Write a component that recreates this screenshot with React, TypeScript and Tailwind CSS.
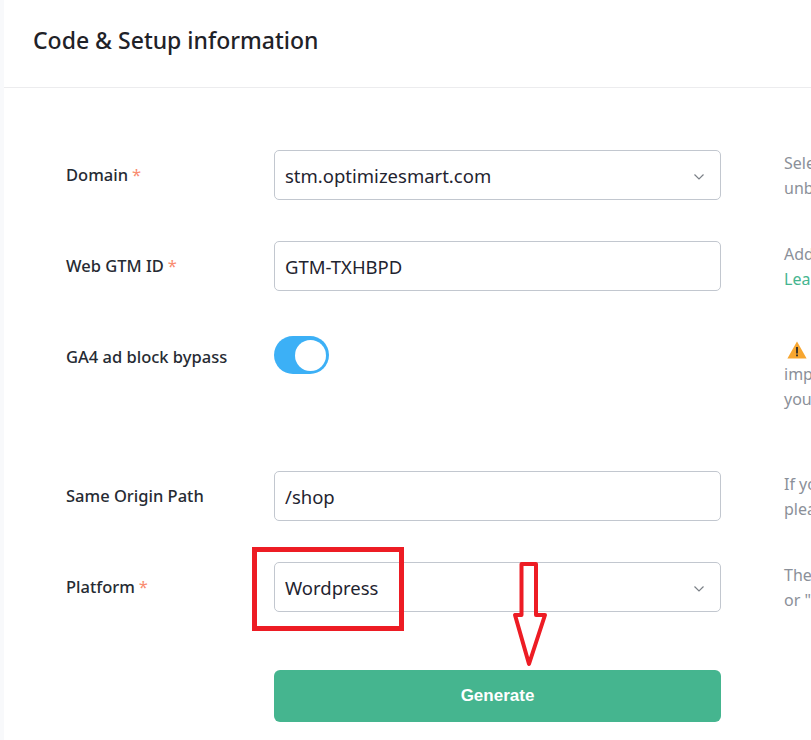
import React from "react";

const font = { fontFamily: '"Noto Sans", sans-serif' };

function Chevron() {
  return (
    <svg width="12" height="8" viewBox="0 0 12 8" fill="none" className="absolute right-[15px] top-[22px]">
      <path d="M1.5 1.5 6 6l4.5-4.5" stroke="#7b8087" strokeWidth="1.2" />
    </svg>
  );
}

function Field({ value, select }: { value: string; select?: boolean }) {
  return (
    <div className="relative flex h-[50px] w-[447px] shrink-0 items-center whitespace-nowrap rounded-[5px] border border-[#c2c7cf] bg-white pl-[10px] pt-[1px] text-[18.5px] text-[#1f2430]">
      {value}
      {select && <Chevron />}
    </div>
  );
}

function Label({ text, required }: { text: string; required?: boolean }) {
  return (
    <div className="w-[208px] shrink-0 text-[16.5px] font-medium text-[#262b33]">
      {text}
      {required && <span className="ml-1 font-normal text-[#f98c70]">*</span>}
    </div>
  );
}

function Help({ children }: { children: React.ReactNode }) {
  return (
    <div className="ml-[63px] w-[420px] shrink-0 self-start whitespace-nowrap pt-[1px] text-[16px] leading-[25px] text-[#8b9099]">
      {children}
    </div>
  );
}

export default function App() {
  return (
    <div className="relative h-[740px] w-[811px] overflow-hidden bg-white pl-[4px]" style={font}>
      <div className="absolute left-0 top-0 h-full w-[4px] bg-[#f8f9fb]" />
      <header className="flex h-[88px] items-center border-b border-[#ececee] pb-[6px] pl-[29px]">
        <h1 className="text-[23px] font-medium text-[#1f2228]">Code &amp; Setup information</h1>
      </header>

      <div className="pl-[62px] pt-[62px]">
        <div className="mb-[41px] flex h-[50px] items-center">
          <Label text="Domain" required />
          <Field value="stm.optimizesmart.com" select />
          <Help>
            <div>Select the domain to use for</div>
            <div>unblockable tracking</div>
          </Help>
        </div>

        <div className="mb-[45px] flex h-[50px] items-center">
          <Label text="Web GTM ID" required />
          <Field value="GTM-TXHBPD" />
          <Help>
            <div>Add your web GTM container ID</div>
            <div className="text-[#45b58f]">Learn more</div>
          </Help>
        </div>

        <div className="mb-[60px] flex h-[75px] items-start">
          <div className="pt-[9px]">
            <Label text="GA4 ad block bypass" />
          </div>
          <div className="w-[447px] shrink-0">
            <div className="flex h-[38px] w-[55px] items-center justify-end rounded-full bg-[#3cb0f6] pr-[3px]">
              <div className="h-[31px] w-[31px] rounded-full bg-white" />
            </div>
          </div>
          <Help>
            <div className="flex h-[25px] items-center pl-[3px]">
              <svg width="20" height="18" viewBox="0 0 20 18">
                <path d="M10 0.5 19.6 17.5H0.4Z" fill="#f7a630" />
                <rect x="9.1" y="6" width="1.8" height="6.5" fill="#2b2b2b" />
                <rect x="9.1" y="13.5" width="1.8" height="1.8" fill="#2b2b2b" />
              </svg>
            </div>
            <div>important: enable this only if</div>
            <div>you use a custom domain</div>
          </Help>
        </div>

        <div className="mb-[41px] flex h-[50px] items-center">
          <Label text="Same Origin Path" />
          <Field value="/shop" />
          <Help>
            <div>If you use a same origin path,</div>
            <div>please enter it here</div>
          </Help>
        </div>

        <div className="mb-[58px] flex h-[50px] items-center">
          <Label text="Platform" required />
          <Field value="Wordpress" select />
          <Help>
            <div>The platform of your website</div>
            <div>or "Other"</div>
          </Help>
        </div>

        <div className="ml-[208px] flex h-[52px] w-[447px] items-center justify-center rounded-[6px] bg-[#45b58f] text-[17px] font-bold text-white" style={{ fontFamily: '"Liberation Sans", sans-serif' }}>
          Generate
        </div>
      </div>

      <div className="absolute left-[252px] top-[547px] h-[84px] w-[152px] border-[5px] border-[#ed1c24]" />
      <svg className="absolute left-[510px] top-[560px]" width="40" height="108" viewBox="0 0 40 108" fill="none">
        <path d="M11.5 4H26V55H35L19 104L5 55H11.5Z" stroke="#ed1c24" strokeWidth="4" strokeLinejoin="round" />
      </svg>
    </div>
  );
}
